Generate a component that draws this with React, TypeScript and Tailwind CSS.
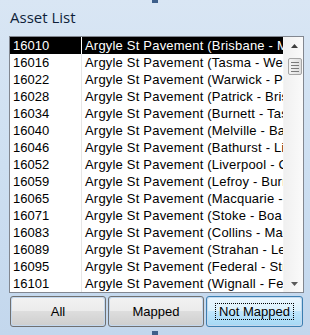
import React from "react";

const rows: [string, string][] = [
  ["16010", "Argyle St Pavement (Brisbane - Margaret)"],
  ["16016", "Argyle St Pavement (Tasma - Wellington)"],
  ["16022", "Argyle St Pavement (Warwick - Patrick)"],
  ["16028", "Argyle St Pavement (Patrick - Brisbane)"],
  ["16034", "Argyle St Pavement (Burnett - Tasma)"],
  ["16040", "Argyle St Pavement (Melville - Bathurst)"],
  ["16046", "Argyle St Pavement (Bathurst - Liverpool)"],
  ["16052", "Argyle St Pavement (Liverpool - Collins)"],
  ["16059", "Argyle St Pavement (Lefroy - Burnett)"],
  ["16065", "Argyle St Pavement (Macquarie - Davey)"],
  ["16071", "Argyle St Pavement (Stoke - Boa Vista)"],
  ["16083", "Argyle St Pavement (Collins - Macquarie)"],
  ["16089", "Argyle St Pavement (Strahan - Lefroy)"],
  ["16095", "Argyle St Pavement (Federal - Strahan)"],
  ["16101", "Argyle St Pavement (Wignall - Federal)"],
];

const font = { fontFamily: '"Liberation Sans", Arial, sans-serif' };

export default function App() {
  return (
    <div
      className="relative w-[310px] h-[335px] overflow-hidden bg-gradient-to-b from-[#d9e6f4] via-[#cddff1] to-[#c3d7ed]"
      style={font}
    >
      {/* designer handles */}
      <div className="absolute left-[152px] top-0 w-[6px] h-[3px] bg-[#3e5f8a]" />
      <div className="absolute left-[152px] top-[331px] w-[6px] h-[4px] bg-[#3e5f8a]" />

      <div
        className="h-[36px] pl-[10px] pt-[7px] text-[15px] leading-[20px] text-[#0f1f3a]"
        style={{ fontFamily: '"Open Sans", "Noto Sans", sans-serif' }}
      >
        Asset List
      </div>

      <div className="ml-[9px] w-[295px] h-[257px] border border-[#828790] bg-white flex">
        <div className="flex-1 flex flex-col overflow-hidden">
          {rows.map(([id, name], i) => {
            const sel = i === 0;
            return (
              <div
                key={id}
                className={`flex h-[17px] shrink-0 text-[13px] leading-[17px] ${
                  sel ? "text-white" : "text-black"
                }`}
              >
                <div
                  className={`w-[71px] shrink-0 pl-[3px] overflow-hidden whitespace-nowrap ${
                    sel ? "bg-black" : ""
                  }`}
                >
                  {id}
                </div>
                <div className={`w-[1px] shrink-0 ${sel ? "bg-white" : "bg-[#e6e6e6]"}`} />
                <div
                  className={`flex-1 pl-[3px] overflow-hidden whitespace-nowrap tracking-[0.2px] ${
                    sel ? "bg-black" : ""
                  }`}
                >
                  {name}
                </div>
              </div>
            );
          })}
        </div>
        {/* scrollbar */}
        <div className="w-[20px] shrink-0 flex flex-col bg-gradient-to-r from-[#f0f0f0] to-[#fafafa] border-l border-[#f4f4f4]">
          <div className="h-[17px] flex items-center justify-center pl-[2px]">
            <svg width="7" height="4" viewBox="0 0 7 4">
              <polygon points="3.5,0 7,4 0,4" fill="#3e3e3e" />
            </svg>
          </div>
          <div className="h-[4px]" />
          <div className="ml-[4px] w-[14px] h-[17px] rounded-[2px] border border-[#a5a5a5] bg-gradient-to-r from-[#f4f4f4] to-[#dedede] flex flex-col items-center justify-center gap-[2px]">
            <div className="w-[8px] h-[1px] bg-[#7a7a7a]" />
            <div className="w-[8px] h-[1px] bg-[#7a7a7a]" />
            <div className="w-[8px] h-[1px] bg-[#7a7a7a]" />
            <div className="w-[8px] h-[1px] bg-[#7a7a7a]" />
          </div>
          <div className="flex-1" />
          <div className="h-[17px] flex items-center justify-center pl-[2px]">
            <svg width="7" height="4" viewBox="0 0 7 4">
              <polygon points="0,0 7,0 3.5,4" fill="#5a5a5a" />
            </svg>
          </div>
        </div>
      </div>

      <div className="mt-[3px] pl-[10px] flex gap-[2px]">
        {["All", "Mapped"].map((t) => (
          <div
            key={t}
            className="w-[96px] h-[31px] rounded-[3px] border border-[#707070] p-[1px]"
          >
            <div className="h-full rounded-[2px] flex items-center justify-center text-[13px] text-black bg-[linear-gradient(#f2f2f2_0%,#ebebeb_50%,#dddddd_50%,#cfcfcf_100%)]">
              {t}
            </div>
          </div>
        ))}
        <div className="w-[97px] h-[31px] rounded-[3px] border border-[#3c7fb1] p-[1px]">
          <div className="h-full rounded-[2px] flex items-center justify-center text-[13px] text-black bg-[linear-gradient(#eaf6fd_0%,#d9f0fc_50%,#bee6fd_50%,#a7d9f5_100%)]">
            <span className="border border-dotted border-black px-[3px] leading-[15px]">
              Not Mapped
            </span>
          </div>
        </div>
      </div>
    </div>
  );
}
